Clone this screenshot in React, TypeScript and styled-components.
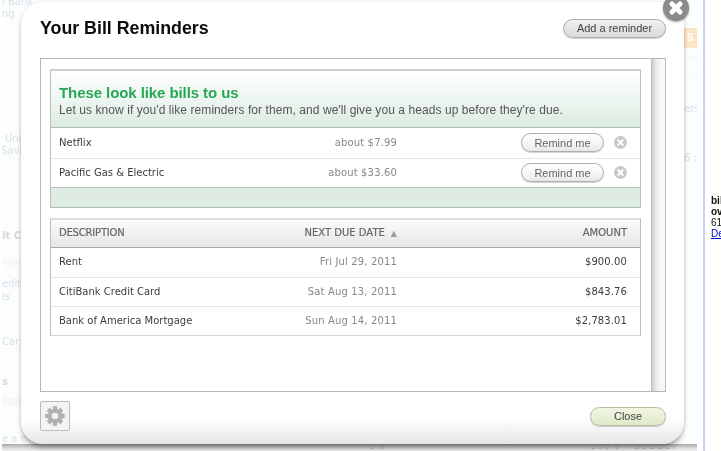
import { FC } from "react";
import styled, { createGlobalStyle } from "styled-components";

const GlobalStyle = createGlobalStyle`
  html, body { margin: 0; padding: 0; background: #fff; }
  body { font-family: "Liberation Sans", Arial, sans-serif; }
`;

const LUCIDA = `"DejaVu Sans", "Liberation Sans", sans-serif`;

const Page = styled.div`
  position: relative;
  display: flex;
  width: 721px;
  height: 451px;
  overflow: hidden;
  background: #fff;
  filter: blur(0.3px);
`;

/* faded page behind the modal */
const Backdrop = styled.div`
  flex: none;
  display: grid;
  grid-template-columns: 19px 663px 13px;
  grid-template-rows: 444px 7px;
  width: 695px;
  margin-left: 2px;
  background: #fcfdfd;
  overflow: hidden;
`;

const Strip = styled.div`
  display: flex;
  flex-direction: column;
  white-space: nowrap;
`;

const RightStrip = styled(Strip)`
  overflow: hidden;
`;

const Ghost = styled.div<{ $top: number; $bold?: boolean; $indent?: number }>`
  margin-top: ${(p) => p.$top}px;
  margin-left: ${(p) => p.$indent ?? 0}px;
  font: ${(p) => (p.$bold ? 700 : 400)} 10px/12px ${LUCIDA};
  color: ${(p) => (p.$bold ? "#d8d8d8" : "#d6e2e8")};
`;

const Band = styled.div<{ $top: number; $height: number }>`
  flex: none;
  margin-top: ${(p) => p.$top}px;
  height: ${(p) => p.$height}px;
  background: #f6f7f7;
`;

const OrangeTag = styled.div`
  margin-top: 28px;
  height: 20px;
  background: #fde6c8;
  color: #fff;
  font: 700 10px/20px "Liberation Sans", sans-serif;
  padding-left: 3px;
`;

const BottomStrip = styled.div`
  grid-column: 1 / -1;
  display: flex;
  align-items: flex-start;
  padding-left: 367px;
  font: 400 9px/5px ${LUCIDA};
  letter-spacing: 1px;
  color: #b4b4b4;
  white-space: nowrap;
  overflow: hidden;
  background: linear-gradient(#a8a8a8, #dcdcdc 60%, #f0f0f0);
`;

const BottomLabel = styled.span<{ $gap: number }>`
  margin-left: ${(p) => p.$gap}px;
`;

const Rule = styled.div`
  flex: none;
  width: 2px;
  margin-left: 6px;
  background: #c5d5f6;
`;

const SideNote = styled.div`
  flex: none;
  padding: 195px 0 0 6px;
  font: 400 10px/11px "Liberation Sans", sans-serif;
  color: #111;
  white-space: nowrap;
`;

const SideBold = styled.div`
  font-weight: 700;
`;

const SideLink = styled.a`
  color: #0000d0;
  text-decoration: underline;
`;

/* modal */
const Modal = styled.section`
  position: absolute;
  left: 21px;
  top: 2px;
  box-sizing: border-box;
  display: flex;
  flex-direction: column;
  width: 663px;
  height: 442px;
  padding: 16px 18px 0 19px;
  border-radius: 22px;
  background: linear-gradient(#fff 0, #fff 416px, #e6e6e6 442px);
  box-shadow: 0 0 3px rgba(0, 0, 0, 0.12), 0 5px 6px -2px rgba(0, 0, 0, 0.4);
`;

const DismissBadge = styled.svg`
  position: absolute;
  right: -6px;
  top: -8px;
  filter: drop-shadow(0 1px 1px rgba(0, 0, 0, 0.35));
`;

const ModalHeader = styled.header`
  display: flex;
  align-items: center;
  justify-content: space-between;
  height: 20px;
  margin-bottom: 20px;
`;

const Title = styled.h1`
  margin: 0;
  font: 700 17.8px/20px "Liberation Sans", sans-serif;
  color: #0c0c0c;
`;

const Pill = styled.button<{ $width: number; $tone?: "grey" | "white" | "green" }>`
  box-sizing: border-box;
  flex: none;
  width: ${(p) => p.$width}px;
  height: 19px;
  padding: 0;
  border: 1px solid ${(p) => (p.$tone === "green" ? "#b2bea0" : "#aeaeae")};
  border-radius: 10px;
  font: 400 11px/16px "Liberation Sans", sans-serif;
  color: ${(p) => (p.$tone === "white" ? "#666" : "#444")};
  background: ${(p) =>
    p.$tone === "green"
      ? "linear-gradient(#f1f6e4, #dfe9c6)"
      : p.$tone === "white"
        ? "linear-gradient(#fff, #f4f4f4 60%, #e8e8e8)"
        : "linear-gradient(#f0f0f0, #d9d9d9)"};
  box-shadow: 0 1px 1px rgba(0, 0, 0, 0.18);
`;

const Panel = styled.div`
  box-sizing: border-box;
  display: flex;
  flex: none;
  height: 334px;
  border: 1px solid #b7b7b7;
`;

const PanelBody = styled.div`
  flex: 1;
  min-width: 0;
  padding: 10px 10px 0 9px;
`;

const ScrollTrack = styled.div`
  flex: none;
  width: 14px;
  background: linear-gradient(90deg, #bdbdbd 0, #dedede 3px, #f1f1f1 7px, #fbfbfb 100%);
`;

const Suggestions = styled.div`
  border: 1px solid #a9c2b1;
  border-top: 2px solid #cfcfcf;
  border-left-color: #bcbcbc;
  border-right-color: #bcbcbc;
`;

const SuggestHead = styled.div`
  box-sizing: border-box;
  height: 57px;
  padding: 13px 0 0 8px;
  background: linear-gradient(#fff, #dcece2);
  border-bottom: 1px solid #a5c0ae;
`;

const SuggestTitle = styled.h2`
  margin: 0;
  font: 700 15px/17px "Liberation Sans", sans-serif;
  letter-spacing: -0.08px;
  color: #27a856;
`;

const SuggestText = styled.p`
  margin: 2px 0 0;
  font: 400 12px/15px "Liberation Sans", sans-serif;
  letter-spacing: 0.07px;
  color: #555;
`;

const SuggestFoot = styled.div`
  height: 19px;
  background: #deece3;
  border-top: 1px solid #a9c2b1;
`;

const Row = styled.div<{ $height?: number }>`
  box-sizing: border-box;
  display: flex;
  align-items: center;
  height: ${(p) => p.$height ?? 29.5}px;
  padding: 0 13px 0 8px;
  font: 400 10px/14px ${LUCIDA};
  color: #3c3c3c;
  & + & {
    border-top: 1px solid #e6e6e6;
  }
`;

const Name = styled.span`
  flex: none;
  width: 210px;
`;

const HeadName = styled(Name)`
  letter-spacing: -0.2px;
`;

const Muted = styled.span`
  flex: none;
  width: 128px;
  text-align: right;
  color: #888;
  letter-spacing: 0.15px;
`;

const RowActions = styled.div`
  display: flex;
  align-items: center;
  margin-left: auto;
  gap: 10px;
`;

const Bills = styled.div`
  margin-top: 9.5px;
  border-top: 2px solid #dedede;
  border-left: 1px solid #bcbcbc;
  border-right: 1px solid #bcbcbc;
  border-bottom: 1px solid #d4d4d4;
`;

const BillsHead = styled.div`
  box-sizing: border-box;
  display: flex;
  align-items: center;
  height: 28px;
  padding: 0 13px 0 8px;
  background: linear-gradient(#fbfbfb, #e6e6e6);
  border-bottom: 1px solid #a9a9a9;
  font: 400 10px/14px ${LUCIDA};
  -webkit-text-stroke: 0.2px #666;
  color: #666;
`;

const SortCell = styled.span`
  flex: none;
  width: 128px;
  text-align: right;
  white-space: nowrap;
`;

const SortArrow = styled.span`
  margin-left: 6px;
  font-size: 8px;
  color: #999;
  -webkit-text-stroke: 0;
`;

const HeadAmount = styled.span`
  margin-left: auto;
`;

const Amount = styled.span`
  margin-left: auto;
  color: #3c3c3c;
  letter-spacing: 0.1px;
`;

const ModalFooter = styled.footer`
  display: flex;
  align-items: flex-start;
  justify-content: space-between;
  padding-top: 9px;
`;

const GearBox = styled.div`
  box-sizing: border-box;
  display: flex;
  align-items: center;
  justify-content: center;
  width: 30px;
  height: 30px;
  border: 1px solid #bbb;
  border-radius: 2px;
  background: #f3f3f3;
`;

const CloseWrap = styled.div`
  padding-top: 5px;
`;

const SmallX: FC = () => (
  <svg width="13" height="13" viewBox="0 0 13 13" aria-hidden="true">
    <circle cx="6.500" cy="6.500" r="6.500" fill="#c9c9c9" />
    <path d="M4.300 4.300l4.400 4.400M8.700 4.300l-4.400 4.400" stroke="#fff" strokeWidth="2" strokeLinecap="round" />
  </svg>
);

const Gear: FC = () => (
  <svg width="20" height="20" viewBox="0 0 20 20" aria-hidden="true">
    <g fill="#b0b0b0">
      {[0, 45, 90, 135, 180, 225, 270, 315].map((a) => (
        <rect key={a} x="7.800" y="0.300" width="4.400" height="5" rx="0.800" transform={`rotate(${a} 10 10)`} />
      ))}
    </g>
    <circle cx="10" cy="10" r="5.200" fill="none" stroke="#b0b0b0" strokeWidth="3.800" />
  </svg>
);

const suggestions = [
  { name: "Netflix", amount: "about $7.99" },
  { name: "Pacific Gas & Electric", amount: "about $33.60" },
];

const bills = [
  { name: "Rent", due: "Fri Jul 29, 2011", amount: "$900.00" },
  { name: "CitiBank Credit Card", due: "Sat Aug 13, 2011", amount: "$843.76" },
  { name: "Bank of America Mortgage", due: "Sun Aug 14, 2011", amount: "$2,783.01" },
];

const App: FC = () => (
  <Page>
    <GlobalStyle />
    <Backdrop>
      <Strip>
        <Ghost $top={-4}>l Bank</Ghost>
        <Ghost $top={0}>ng</Ghost>
        <Ghost $top={113} $indent={3}>Uni</Ghost>
        <Ghost $top={0} $indent={-1}>Savi</Ghost>
        <Ghost $top={73} $bold>it C</Ghost>
        <Band $top={17} $height={6} />
        <Ghost $top={13}>edit</Ghost>
        <Ghost $top={1}>ls</Ghost>
        <Ghost $top={33}>Car</Ghost>
        <Ghost $top={28} $bold>s</Ghost>
        <Band $top={10} $height={8} />
        <Ghost $top={27}>e a m</Ghost>
      </Strip>
      <div />
      <RightStrip>
        <OrangeTag>S</OrangeTag>
        <Band $top={8} $height={1} />
        <Band $top={18} $height={1} />
        <Ghost $top={27}>ers</Ghost>
        <Ghost $top={37}>6 :</Ghost>
      </RightStrip>
      <BottomStrip>
        <span>0%</span>
        <BottomLabel $gap={205}>100%</BottomLabel>
        <BottomLabel $gap={14}>BUDGET</BottomLabel>
        <BottomLabel $gap={18}>OV</BottomLabel>
      </BottomStrip>
    </Backdrop>
    <Rule />
    <SideNote>
      <SideBold>bills</SideBold>
      <SideBold>over</SideBold>
      <div>61</div>
      <SideLink>Details</SideLink>
    </SideNote>

    <Modal>
      <DismissBadge width="28" height="28" viewBox="0 0 28 28" aria-hidden="true">
        <circle cx="14" cy="14" r="13" fill="#8b8b8b" />
        <path d="M10 10l8 8M18 10l-8 8" stroke="#fff" strokeWidth="5" strokeLinecap="round" />
      </DismissBadge>
      <ModalHeader>
        <Title>Your Bill Reminders</Title>
        <Pill $width={103}>Add a reminder</Pill>
      </ModalHeader>
      <Panel>
        <PanelBody>
          <Suggestions>
            <SuggestHead>
              <SuggestTitle>These look like bills to us</SuggestTitle>
              <SuggestText>
                Let us know if you'd like reminders for them, and we'll give you a heads up before they're due.
              </SuggestText>
            </SuggestHead>
            {suggestions.map((s) => (
              <Row key={s.name}>
                <Name>{s.name}</Name>
                <Muted>{s.amount}</Muted>
                <RowActions>
                  <Pill $width={83} $tone="white">Remind me</Pill>
                  <SmallX />
                </RowActions>
              </Row>
            ))}
            <SuggestFoot />
          </Suggestions>
          <Bills>
            <BillsHead>
              <HeadName>DESCRIPTION</HeadName>
              <SortCell>
                NEXT DUE DATE<SortArrow>▲</SortArrow>
              </SortCell>
              <HeadAmount>AMOUNT</HeadAmount>
            </BillsHead>
            {bills.map((b) => (
              <Row key={b.name} $height={29.3}>
                <Name>{b.name}</Name>
                <Muted>{b.due}</Muted>
                <Amount>{b.amount}</Amount>
              </Row>
            ))}
          </Bills>
        </PanelBody>
        <ScrollTrack />
      </Panel>
      <ModalFooter>
        <GearBox>
          <Gear />
        </GearBox>
        <CloseWrap>
          <Pill $width={76} $tone="green">Close</Pill>
        </CloseWrap>
      </ModalFooter>
    </Modal>
  </Page>
);

export default App;
